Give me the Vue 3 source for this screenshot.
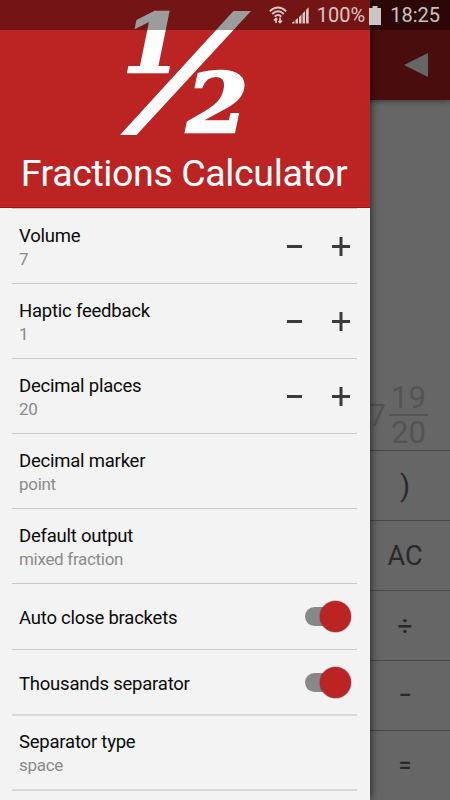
<template>
  <div class="screen">
    <div class="calculator">
      <header class="toolbar">
        <svg width="24" height="24" viewBox="0 0 24 24">
          <path d="M0 12 24 0v24z" fill="#fff" />
        </svg>
      </header>

      <div class="display">
        <span class="whole">7</span>
        <span class="fraction">
          <span class="numerator">19</span>
          <span class="denominator">20</span>
        </span>
      </div>

      <div class="keys">
        <button v-for="key in keys" :key="key.label" class="key" :class="key.size">{{ key.label }}</button>
      </div>
    </div>

    <div class="scrim"></div>

    <aside class="drawer">
      <div class="drawer-header">
        <svg class="logo" width="150" height="150" viewBox="0 0 150 150" fill="#fff">
          <text class="digit" transform="translate(13 71.700) scale(1.06 1)" font-size="80">1</text>
          <path d="M123.500 11h17.500L26.500 135H10z" />
          <text class="digit" transform="translate(76.500 131.800) scale(1.08 1)" font-size="82">2</text>
        </svg>
        <h1>Fractions Calculator</h1>
      </div>

      <ul class="settings">
        <li v-for="item in settings" :key="item.title" class="setting" :class="item.type">
          <div class="label">
            <div class="title">{{ item.title }}</div>
            <div v-if="item.type !== 'toggle'" class="value">{{ item.value }}</div>
          </div>

          <div v-if="item.type === 'stepper'" class="stepper">
            <button @click="item.value--">
              <svg width="19" height="19" viewBox="0 0 19 19"><path d="M2 9.500h15" /></svg>
            </button>
            <button @click="item.value++">
              <svg width="19" height="19" viewBox="0 0 19 19"><path d="M0 9.500h18M9 0v19" /></svg>
            </button>
          </div>

          <div v-if="item.type === 'toggle'" class="switch" :class="{ on: item.value }" @click="item.value = !item.value">
            <span class="thumb"></span>
          </div>
        </li>
      </ul>
    </aside>

    <div class="status-bar">
      <svg class="wifi" width="18" height="18" viewBox="0 0 18 18" fill="none" stroke="currentColor">
        <path d="M.8 5.200Q9-2.200 17.200 5.200M3.200 8Q9 2.500 14.800 8M5.700 10.600Q9 7.200 12.300 10.600" stroke-width="2" />
        <path d="M7 17v-4.500M5 14.500l2-2 1.300 1.300M11 11.500v5M9.500 15l1.500 1.500 2-2" stroke-width="1.600" />
      </svg>
      <svg class="signal" width="17" height="17" viewBox="0 0 17 17" fill="currentColor">
        <path d="M0 16.500v-1l2.500-1.500v2.500zM3.500 13l2.500-2v5.500H3.500zM7 10l2.500-2.500v9H7zM10.500 6.500l2.500-2.500v12.500h-2.500zM14 3l2.700-2.800v16.300H14z" />
      </svg>
      <span class="percent">100%</span>
      <svg class="battery" width="12" height="19" viewBox="0 0 12 19" fill="currentColor">
        <path d="M3.500 0h5v2H12v17H0V2h3.500z" />
      </svg>
      <span class="clock">18:25</span>
    </div>
  </div>
</template>

<script setup>
import { ref } from 'vue'

const keys = [
  { label: ')', size: 'bracket' },
  { label: 'AC', size: 'large' },
  { label: '÷', size: 'operator' },
  { label: '−', size: 'small' },
  { label: '=', size: 'small' }
]

const settings = ref([
  { title: 'Volume', value: 7, type: 'stepper' },
  { title: 'Haptic feedback', value: 1, type: 'stepper' },
  { title: 'Decimal places', value: 20, type: 'stepper' },
  { title: 'Decimal marker', value: 'point', type: 'choice' },
  { title: 'Default output', value: 'mixed fraction', type: 'choice' },
  { title: 'Auto close brackets', value: true, type: 'toggle' },
  { title: 'Thousands separator', value: true, type: 'toggle' },
  { title: 'Separator type', value: 'space', type: 'choice' }
])
</script>

<style>
body {
  overflow: hidden;
}
</style>

<style scoped>
.screen {
  position: relative;
  width: 450px;
  height: 800px;
  overflow: hidden;
  font-family: Roboto, sans-serif;
}

button {
  padding: 0;
  border: 0;
  background: none;
  font-family: inherit;
}

.calculator {
  display: flex;
  flex-direction: column;
  height: 100%;
  background: #fff;
}

.toolbar {
  display: flex;
  justify-content: flex-end;
  align-items: flex-end;
  box-sizing: border-box;
  height: 100px;
  padding: 0 22px 23px 0;
  background: #b82222;
  box-shadow: 0 1px 6px rgba(0, 0, 0, 0.5);
}

.display {
  display: flex;
  flex: 1;
  justify-content: flex-end;
  align-items: flex-end;
  padding: 0 22px 1px 0;
  color: #d2d2d2;
  font-size: 31px;
}

.whole {
  margin-right: 3px;
  line-height: 66px;
}

.fraction {
  display: flex;
  flex-direction: column;
  width: 39px;
  text-align: center;
  line-height: 33px;
}

.numerator {
  border-bottom: 2px solid #d2d2d2;
}

.keys {
  display: flex;
  flex-direction: column;
  height: 350px;
}

.key {
  height: 70px;
  padding-left: 360px;
  border-top: 1px solid #b4b4b4;
  color: #666;
  font-size: 27px;
}

.key.bracket {
  font-size: 29px;
}

.key.operator {
  font-size: 26px;
  font-weight: 500;
}

.key.small {
  font-size: 23px;
  font-weight: 500;
}

.scrim {
  position: absolute;
  inset: 0;
  background: rgba(0, 0, 0, 0.6);
}

.drawer {
  position: absolute;
  top: 0;
  bottom: 0;
  left: 0;
  width: 370px;
  background: #f3f3f3;
  box-shadow: 0 0 9px rgba(0, 0, 0, 0.75);
}

.drawer-header {
  display: flex;
  flex-direction: column;
  align-items: center;
  box-sizing: border-box;
  height: 208px;
  border-bottom: 1px solid #b00c0c;
  background: #bc2323;
  color: #fff;
}

.logo {
  flex: none;
  overflow: visible;
}

.digit {
  font-family: 'DejaVu Serif', serif;
  font-weight: bold;
  font-style: italic;
  stroke: #fff;
  stroke-width: 2.5px;
}

h1 {
  margin: 0 2px 0 0;
  font-size: 37.5px;
  font-weight: 400;
  letter-spacing: -0.38px;
  line-height: 46px;
  white-space: nowrap;
}

.settings {
  margin: 0;
  padding: 0 13px 0 12px;
  list-style: none;
}

.setting {
  display: flex;
  justify-content: space-between;
  align-items: center;
  box-sizing: border-box;
  height: 75px;
  padding: 0 6px 0 7px;
  border-top: 1px solid #c9c9c9;
}

.setting.toggle {
  height: 66px;
}

.setting.toggle + .toggle {
  height: 65px;
}

.toggle + .choice {
  border-top: 2px solid #d8d8d8;
}

.setting:last-child {
  height: 77px;
  border-bottom: 2px solid #d8d8d8;
}

.label {
  padding-top: 1px;
}

.toggle .label {
  padding-top: 3px;
}

.setting:last-child .label {
  padding-top: 0;
}

.title {
  color: #0a0a0a;
  font-size: 18.5px;
  letter-spacing: -0.22px;
  line-height: 24px;
}

.value {
  color: #8b8b8b;
  font-size: 17px;
  letter-spacing: -0.3px;
  line-height: 22px;
}

.stepper {
  display: flex;
  gap: 28px;
}

.stepper button {
  display: flex;
}

.stepper path {
  stroke: #3a3a3a;
  stroke-width: 3;
}

.switch {
  display: flex;
  align-items: center;
  width: 46px;
  height: 32px;
}

.switch::before {
  content: '';
  width: 34px;
  height: 19px;
  border-radius: 10px;
  background: #888;
}

.thumb {
  width: 31px;
  height: 31px;
  margin-left: -34px;
  border-radius: 50%;
  background: #999;
  box-shadow: 0 0 1px 0.5px rgba(0, 0, 0, 0.4);
}

.on .thumb {
  margin-left: -19px;
  background: #bc2323;
}

.status-bar {
  position: absolute;
  top: 0;
  left: 0;
  display: flex;
  justify-content: flex-end;
  align-items: center;
  box-sizing: border-box;
  width: 100%;
  height: 30px;
  padding-right: 10px;
  background: rgba(0, 0, 0, 0.39);
  color: rgba(255, 255, 255, 0.76);
  font-size: 20px;
}

.signal {
  margin: 0 8px 0 5px;
}

.battery {
  margin: 0 9px 0 4px;
}
</style>
